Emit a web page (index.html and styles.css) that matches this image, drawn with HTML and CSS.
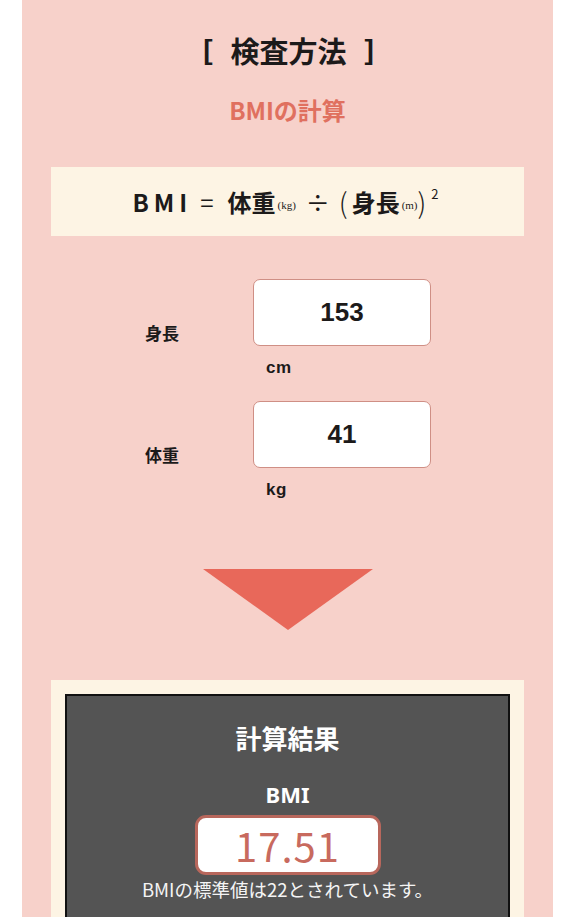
FILE: index.html
```html
<!DOCTYPE html>
<html lang="ja">
<head>
<meta charset="utf-8">
<link rel="stylesheet" href="styles.css">
</head>
<body>
<div class="panel">
  <h2 class="title"><span class="br">[</span>検査方法<span class="br">]</span></h2>
  <h3 class="subtitle">BMIの計算</h3>
  <div class="formula">
    <span class="bmi">BMI</span><span class="op">=</span>体重<span class="sm">(kg)</span><span class="op2">÷</span><span class="paren open">(</span>身長<span class="sm">(m)</span><span class="paren close">)</span><sup>2</sup>
  </div>
  <div class="form">
    <div class="row">
      <div class="label">身長</div>
      <div class="field">
        <div class="input">153</div>
        <div class="unit">cm</div>
      </div>
    </div>
    <div class="row">
      <div class="label">体重</div>
      <div class="field">
        <div class="input">41</div>
        <div class="unit">kg</div>
      </div>
    </div>
  </div>
  <div class="arrow"></div>
  <div class="result-outer">
    <div class="result">
      <div class="r-title">計算結果</div>
      <div class="r-bmi">BMI</div>
      <div class="r-value">17.51</div>
      <div class="r-note">BMIの標準値は22とされています。</div>
    </div>
  </div>
</div>
</body>
</html>
```
FILE: styles.css
```css
html, body {
  margin: 0;
  padding: 0;
  background: #ffffff;
}
body {
  font-family: "Noto Sans CJK JP", "Noto Sans", sans-serif;
  height: 917px;
  overflow: hidden;
}
.panel {
  margin: 0 23px 0 22px;
  background: #f7d1ca;
  padding: 30px 29px 0 29px;
  min-height: 900px;
}
.title {
  margin: 0;
  display: flex;
  justify-content: center;
  align-items: center;
  gap: 18px;
  font-size: 29px;
  font-weight: 700;
  line-height: 40px;
  color: #1c1a1a;
  padding-left: 2px;
}
.title .br {
  font-family: "Liberation Sans", Arial, sans-serif;
  font-weight: 700;
  font-size: 28px;
}
.subtitle {
  margin: 20px 0 0;
  text-align: center;
  font-size: 24px;
  font-weight: 700;
  line-height: 40px;
  color: #e0705f;
}
.formula {
  margin-top: 37px;
  background: #fdf4e4;
  height: 69px;
  display: flex;
  align-items: center;
  justify-content: center;
  font-size: 24px;
  font-weight: 700;
  color: #1c1a1a;
  padding-right: 4px;
}
.formula .bmi {
  letter-spacing: 5px;
}
.formula .op {
  margin: 0 14px 0 8px;
  font-weight: 400;
}
.formula .op2 {
  margin: 0 9px 0 10px;
  font-weight: 400;
}
.formula .paren {
  font-weight: 300;
  font-size: 28px;
  line-height: 1;
}
.formula .open {
  margin-right: 4px;
}
.formula .sm {
  font-family: "Liberation Serif", serif;
  font-size: 11px;
  font-weight: 400;
  margin-top: 7px;
  margin-left: 2px;
}
.formula sup {
  font-size: 13px;
  font-weight: 400;
  align-self: flex-start;
  margin-top: 17px;
  margin-left: 5px;
}
.form {
  margin-top: 43px;
  display: flex;
  flex-direction: column;
  gap: 20px;
}
.row {
  display: flex;
  align-items: center;
}
.label {
  width: 202px;
  padding-left: 94px;
  box-sizing: border-box;
  font-size: 17px;
  font-weight: 700;
  color: #1c1a1a;
  padding-top: 4px;
}
.field {
  display: flex;
  flex-direction: column;
}
.input {
  width: 178px;
  height: 67px;
  box-sizing: border-box;
  background: #ffffff;
  border: 1.5px solid #cf8f85;
  border-radius: 7px;
  display: flex;
  align-items: center;
  justify-content: center;
  font-family: "Liberation Sans", Arial, sans-serif;
  font-size: 26px;
  font-weight: 700;
  color: #1c1a1a;
}
.unit {
  margin: 9px 0 0 13px;
  font-family: "Liberation Sans", Arial, sans-serif;
  font-size: 17px;
  font-weight: 700;
  line-height: 26px;
  color: #1c1a1a;
  letter-spacing: 0.5px;
}
.arrow {
  width: 0;
  height: 0;
  margin: 66px auto 0;
  border-left: 85px solid transparent;
  border-right: 85px solid transparent;
  border-top: 61px solid #e8685a;
}
.result-outer {
  margin-top: 50px;
  background: #fdf4e4;
  padding: 14px 14px 0;
}
.result {
  background: #545454;
  border: 2px solid #111111;
  border-bottom: none;
  color: #ffffff;
  display: flex;
  flex-direction: column;
  align-items: center;
  padding-top: 24px;
  height: 260px;
}
.r-title {
  font-size: 26px;
  font-weight: 700;
  line-height: 36px;
}
.r-bmi {
  margin-top: 22px;
  font-family: "Noto Sans", sans-serif;
  font-size: 22px;
  font-weight: 700;
  line-height: 32px;
}
.r-value {
  margin-top: 5px;
  width: 186px;
  height: 60px;
  box-sizing: border-box;
  background: #ffffff;
  border: 3px solid #b8675c;
  border-radius: 11px;
  display: flex;
  align-items: center;
  justify-content: center;
  color: #c86a5e;
  font-size: 40px;
  font-weight: 400;
  letter-spacing: 1px;
}
.r-note {
  margin-top: 0;
  font-size: 18.5px;
  line-height: 28px;
  color: #f4f4f4;
}
```
